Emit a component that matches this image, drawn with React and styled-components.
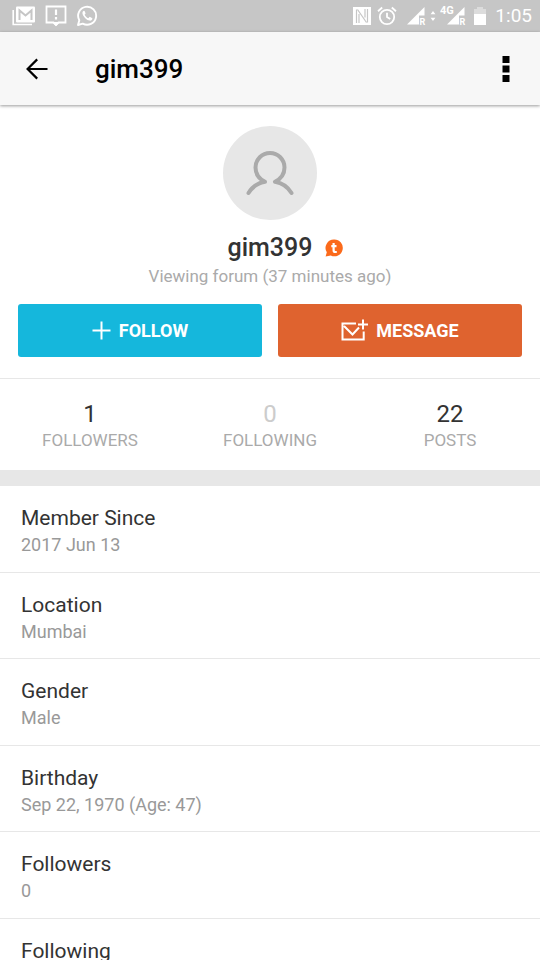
import React from 'react';
import styled, { createGlobalStyle } from 'styled-components';

const stats = [
    { label: 'Followers', value: 1 },
    { label: 'Following', value: 0 },
    { label: 'Posts', value: 22 },
];

const details = [
    { label: 'Member Since', value: '2017 Jun 13' },
    { label: 'Location', value: 'Mumbai' },
    { label: 'Gender', value: 'Male' },
    { label: 'Birthday', value: 'Sep 22, 1970 (Age: 47)' },
    { label: 'Followers', value: '0' },
    { label: 'Following', value: '0' },
];

const MailIcon = () => (
    <svg width='24' height='22' viewBox='0 0 24 22' fill='none' stroke='#fff'>
        <path d='M1.2 5v14.500H20' strokeWidth='1.6' />
        <rect x='4' y='1.500' width='19' height='16' rx='1' fill='#fff' stroke='none' />
        <path d='M7.5 15V5.5l6 5 6-5V15' stroke='#c6c6c6' strokeWidth='2' />
    </svg>
);

const AlertIcon = () => (
    <svg width='22' height='22' viewBox='0 0 22 22' fill='none' stroke='#fff'>
        <path d='M1.5 1.5h19v16h-7L11 20l-2.5-2.5h-7z' strokeWidth='1.8' />
        <path d='M2 17h18l-6 1-3 3-3-3-6-1z' fill='#fff' stroke='none' />
        <path d='M11 4.5v5.5M11 12v2.5' strokeWidth='2.2' />
    </svg>
);

const WhatsappIcon = () => (
    <svg width='22' height='22' viewBox='0 0 22 22' fill='none' stroke='#fff'>
        <path d='M2 20l1.3-4.8a9 9 0 1 1 3.4 3.4z' strokeWidth='1.9' strokeLinejoin='round' />
        <path
            d='M7.8 5.8c-1.6.8-1.8 2.6-.6 4.6 1.5 2.6 3.4 4.4 6.2 5.2 1.6.4 3-.7 3-2.3l-2.7-1.5-1.4 1.5c-1.7-.8-2.9-2-3.7-3.6l1-1.3-1-2.5z'
            fill='#fff'
            stroke='none'
        />
    </svg>
);

const NfcIcon = () => (
    <svg width='20' height='20' viewBox='0 0 20 20' fill='none'>
        <rect x='1' y='1' width='18' height='18' fill='#fff' />
        <path d='M4.500 17V3.500M5.500 3.500l8 11.500M15.500 3v13.500M14.500 16.500l-8-11.500M7 8v9M13 3v8.500' stroke='#c6c6c6' strokeWidth='1.2' />
    </svg>
);

const AlarmIcon = () => (
    <svg width='20' height='20' viewBox='0 0 20 20' fill='none' stroke='#fff' strokeWidth='1.8'>
        <circle cx='10' cy='11' r='7.2' />
        <path d='M1 5.2l4.2-3.7M19 5.2l-4.2-3.7M10 6.8V11l3.2 2' />
    </svg>
);

const SignalIcon = ({ network }) => (
    <svg width={network ? 26 : 20} height='22' viewBox={network ? '-6 0 26 22' : '0 0 20 22'}>
        <path d='M1 19.5L18.5 2v8.500H13v9z' fill='#fff' />
        {network && (
            <>
                <path d='M-6 0H8.500v11h-14.500z' fill='#c6c6c6' />
                <text x='-6' y='9' fill='#fff' fontFamily='Roboto, sans-serif' fontSize='11' fontWeight='700'>
                    {network}
                </text>
            </>
        )}
        <text x='13.5' y='19.500' fill='#fff' fontFamily='Roboto, sans-serif' fontSize='9' fontWeight='700'>
            R
        </text>
    </svg>
);

const DataIcon = () => (
    <svg width='6' height='12' viewBox='0 0 6 12' fill='#fff'>
        <path d='M3 1l2.4 3.2H.6zM3 11L.6 7.8h4.8z' />
    </svg>
);

const BatteryIcon = () => (
    <svg width='14' height='20' viewBox='0 0 14 20'>
        <path d='M4 1h6v2h3v5H1V3h3z' fill='#dcdcdc' />
        <path d='M1 8h12v11H1z' fill='#fff' />
    </svg>
);

const BackIcon = () => (
    <svg width='22' height='22' viewBox='0 0 22 22' fill='none' stroke='#000' strokeWidth='2.2'>
        <path d='M21.5 11H1.8M11.2 1.4L1.6 11l9.6 9.6' />
    </svg>
);

const MoreIcon = () => (
    <svg width='8' height='28' viewBox='0 0 8 28'>
        <path d='M.5 1h7v7h-7zM.5 10.5h7v7h-7zM.5 20h7v7h-7z' />
    </svg>
);

const PersonIcon = () => (
    <svg width='48' height='46' viewBox='0 0 48 46' fill='none' stroke='#aaa' strokeWidth='4' strokeLinecap='round' strokeLinejoin='round'>
        <path d='M2.500 43c4-6.500 9.500-10 16.500-11.200C13.500 29 9.500 24.500 9.500 17.500a14.500 14.500 0 0 1 29 0C38.500 24.500 34.500 29 29 31.800 36 33 41.500 36.500 45.500 43' />
    </svg>
);

const TapatalkIcon = () => (
    <svg width='18' height='18' viewBox='0 0 18 18'>
        <path d='M9.300.5a8.400 8.400 0 1 1-3.500 16L.6 17.500l1.200-4.200A8.400 8.400 0 0 1 9.300.5z' fill='#fb6a1b' />
        <path d='M8.600 4v7.200q0 1.800 1.800 1.800h1.400M6.300 7.200h5.200' fill='none' stroke='#fff' strokeWidth='2.200' />
    </svg>
);

const PlusIcon = () => (
    <svg width='19' height='19' viewBox='0 0 19 19' stroke='#fff' strokeWidth='2'>
        <path d='M9.500.5v18M.5 9.500h18' />
    </svg>
);

const MessageIcon = () => (
    <svg width='27' height='23' viewBox='0 0 27 23' fill='none' stroke='#fff' strokeWidth='2'>
        <path d='M15 4.500H1.500V20.500h21.200V12.500M3 7l8.500 8.500 6.500-7M22 .500v10M17 5.500h10' />
    </svg>
);

const App = () => {
    return (
        <Screen>
            <GlobalStyle />
            <StatusBar>
                <StatusGroup $gap='9px'>
                    <MailIcon />
                    <AlertIcon />
                    <WhatsappIcon />
                </StatusGroup>
                <StatusGroup $gap='5px'>
                    <NfcIcon />
                    <AlarmIcon />
                    <SignalPair>
                        <SignalIcon />
                        <DataIcon />
                        <SignalIcon network='4G' />
                    </SignalPair>
                    <BatteryIcon />
                    <Clock>1:05</Clock>
                </StatusGroup>
            </StatusBar>

            <Header>
                <IconButton type='button' aria-label='Back' $width='74px'>
                    <BackIcon />
                </IconButton>
                <Title>gim399</Title>
                <IconButton type='button' aria-label='More options' $width='68px'>
                    <MoreIcon />
                </IconButton>
            </Header>

            <Content>
                <Profile>
                    <Avatar>
                        <PersonIcon />
                    </Avatar>
                    <NameRow>
                        <Name>gim399</Name>
                        <TapatalkIcon />
                    </NameRow>
                    <Activity>Viewing forum (37 minutes ago)</Activity>
                    <Actions>
                        <ActionButton type='button' $color='#15b7dc'>
                            <PlusIcon />
                            FOLLOW
                        </ActionButton>
                        <ActionButton type='button' $color='#df632f'>
                            <MessageIcon />
                            MESSAGE
                        </ActionButton>
                    </Actions>
                </Profile>

                <Stats>
                    {stats.map((stat) => (
                        <Stat key={stat.label}>
                            <StatValue $muted={stat.value === 0}>{stat.value}</StatValue>
                            <StatLabel>{stat.label}</StatLabel>
                        </Stat>
                    ))}
                </Stats>

                <Details>
                    {details.map((item) => (
                        <DetailRow key={item.label}>
                            <DetailLabel>{item.label}</DetailLabel>
                            <DetailValue>{item.value}</DetailValue>
                        </DetailRow>
                    ))}
                </Details>
            </Content>
        </Screen>
    );
};

export default App;

const GlobalStyle = createGlobalStyle`
    * {
        box-sizing: border-box;
    }

    body {
        margin: 0;
        background-color: #fff;
        color: #333;
        font-family: Roboto, sans-serif;
    }

    svg {
        display: block;
        flex-shrink: 0;
    }
`;

const Screen = styled.div`
    display: flex;
    flex-direction: column;
    height: 100vh;
    overflow: hidden;
`;

const StatusBar = styled.div`
    display: flex;
    flex-shrink: 0;
    align-items: center;
    justify-content: space-between;
    height: 32px;
    padding: 0 8px 0 12px;
    background-color: #c6c6c6;
`;

const StatusGroup = styled.div`
    display: flex;
    align-items: center;
    gap: ${(props) => props.$gap};
`;

const SignalPair = styled.div`
    display: flex;
    align-items: center;
    gap: 4px;
    padding: 0 2px 0 4px;
`;

const Clock = styled.time`
    padding-left: 3px;
    color: #fff;
    font-size: 19px;
    line-height: 24px;
`;

const Header = styled.header`
    position: relative;
    display: flex;
    flex-shrink: 0;
    align-items: center;
    height: 73px;
    background-color: #f7f7f7;
    box-shadow: 0 1px 3px rgba(0, 0, 0, 0.4);
`;

const IconButton = styled.button`
    display: flex;
    align-items: center;
    justify-content: center;
    width: ${(props) => props.$width};
    height: 72px;
    padding: 0;
    border: none;
    background: none;
    cursor: pointer;
`;

const Title = styled.h1`
    flex: 1;
    margin: 0;
    padding-left: 21px;
    color: #000;
    font-size: 26px;
    font-weight: 500;
    line-height: 32px;
`;

const Content = styled.main`
    flex: 1;
    overflow-y: auto;
    scrollbar-width: none;
`;

const Profile = styled.section`
    display: flex;
    flex-direction: column;
    align-items: center;
    padding: 21px 18px;
`;

const Avatar = styled.div`
    display: flex;
    align-items: center;
    justify-content: center;
    width: 94px;
    height: 94px;
    border-radius: 50%;
    background-color: #e7e7e7;
`;

/* the equal side columns keep the name centred next to its badge */
const NameRow = styled.div`
    display: grid;
    grid-template-columns: 1fr auto 1fr;
    align-items: center;
    gap: 13px;
    width: 100%;
    margin-top: 12px;

    svg {
        grid-column: 3;
    }
`;

const Name = styled.h2`
    grid-column: 2;
    margin: 0;
    font-size: 25px;
    font-weight: 500;
    line-height: 32px;
`;

const Activity = styled.p`
    margin: 0 0 16px;
    color: #aaa;
    font-size: 17px;
    line-height: 24px;
`;

const Actions = styled.div`
    display: flex;
    gap: 16px;
    width: 100%;
`;

const ActionButton = styled.button`
    display: flex;
    flex: 1;
    align-items: center;
    justify-content: center;
    gap: 8px;
    height: 53px;
    border: none;
    border-radius: 3px;
    background-color: ${(props) => props.$color};
    color: #fff;
    font-family: inherit;
    font-size: 18px;
    font-weight: 700;
    cursor: pointer;
`;

const Stats = styled.section`
    display: grid;
    grid-template-columns: repeat(3, 1fr);
    padding: 21px 0 18px;
    border-top: 1px solid #e7e7e7;
    border-bottom: 16px solid #e7e7e7;
`;

const Stat = styled.div`
    display: flex;
    flex-direction: column;
    align-items: center;
`;

const StatValue = styled.span`
    color: ${(props) => (props.$muted ? '#ccc' : '#333')};
    font-size: 24px;
    line-height: 28px;
`;

const StatLabel = styled.span`
    color: #aaa;
    font-size: 17px;
    line-height: 24px;
    text-transform: uppercase;
`;

const Details = styled.dl`
    margin: 0;
`;

const DetailRow = styled.div`
    padding: 18px 21px 14px;
    border-bottom: 1px solid #e7e7e7;

    &:nth-child(even) {
        padding-bottom: 13px;
    }
`;

const DetailLabel = styled.dt`
    font-size: 21px;
    line-height: 28px;
`;

const DetailValue = styled.dd`
    margin: 0;
    color: #999;
    font-size: 18px;
    line-height: 26px;
`;
